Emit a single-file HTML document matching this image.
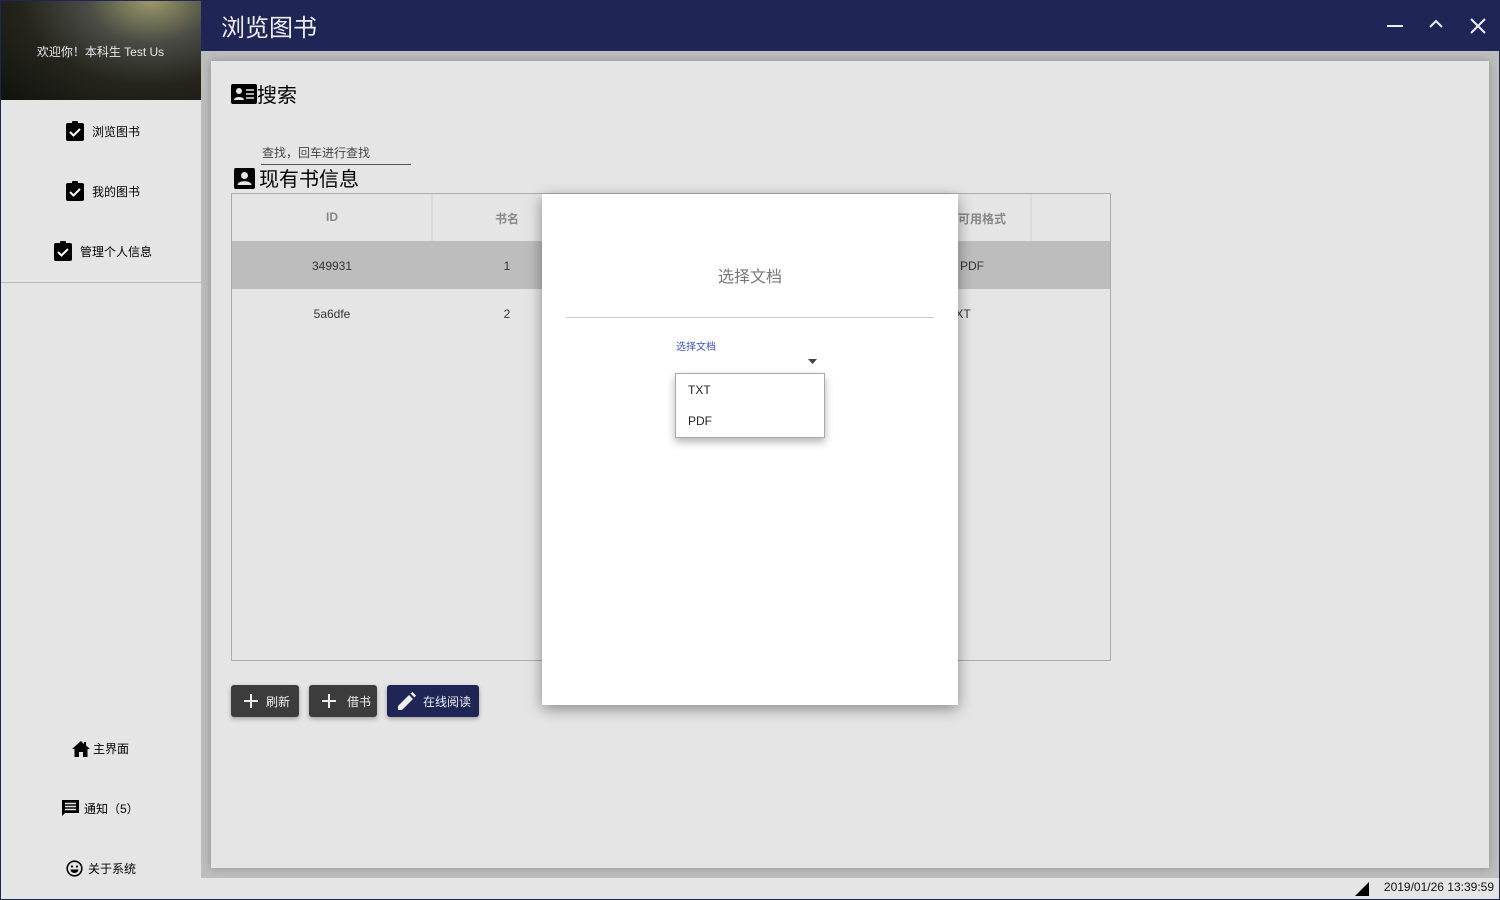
<!DOCTYPE html>
<html><head><meta charset="utf-8"><style>
*{margin:0;padding:0;box-sizing:border-box}
body{width:1500px;height:900px;overflow:hidden;position:relative;background:#e5e5e5;font-family:"Liberation Sans","Noto Sans CJK SC",sans-serif;color:#000}
.abs{position:absolute}
#frame{position:absolute;inset:0;border:1px solid #1f2656;z-index:50;pointer-events:none}
#hdr{left:0;top:0;width:201px;height:100px;background:radial-gradient(ellipse at 75% 0%,#9c9a6a 0%,#4a4c45 30%,#25251e 60%,#12120d 100%)}
#hdr span{position:absolute;left:0;right:0;top:43px;text-align:center;color:#e8e8e8;font-size:12px}
#side{left:0;top:100px;width:201px;height:800px;background:#e5e5e5}
.nav{position:absolute;font-size:12px;display:flex;align-items:center;gap:8px}
#title{left:201px;top:0;width:1299px;height:51px;background:#1f2656;color:#eee}
#title .t{position:absolute;left:20px;top:8px;font-size:24px}
#bg{left:201px;top:51px;width:1299px;height:827px;background:#bdbdbd}
#card{left:211px;top:61px;width:1278px;height:807px;background:#e5e5e5;box-shadow:0 0 8px rgba(0,0,0,.25)}
#status{left:201px;top:878px;width:1299px;height:22px;background:#e5e5e5}
.cell{position:absolute;text-align:center;font-size:12px;color:#333}
.btn{position:absolute;top:685px;height:32px;border-radius:3px;color:#eee;font-size:12px;display:flex;align-items:center;box-shadow:0 2px 5px rgba(0,0,0,.3)}
</style></head><body>
<div id="frame"></div>
<div class="abs" id="hdr"><span>欢迎你！本科生 Test Us</span></div>
<div class="abs" id="side">
  <div style="position:absolute;left:0;top:182px;width:201px;height:1px;background:#bbb"></div>
</div>
<div class="nav" style="left:66px;top:121px"><svg width="18" height="20" viewBox="0 0 18 20"><rect x="0" y="2" width="18" height="18" rx="2"/><rect x="6" y="0" width="6" height="4" rx="1"/><path d="M4 11l3.5 3.5L14 8" stroke="#fff" stroke-width="2" fill="none"/></svg><span>浏览图书</span></div>
<div class="nav" style="left:66px;top:181px"><svg width="18" height="20" viewBox="0 0 18 20"><rect x="0" y="2" width="18" height="18" rx="2"/><rect x="6" y="0" width="6" height="4" rx="1"/><path d="M4 11l3.5 3.5L14 8" stroke="#fff" stroke-width="2" fill="none"/></svg><span>我的图书</span></div>
<div class="nav" style="left:54px;top:241px"><svg width="18" height="20" viewBox="0 0 18 20"><rect x="0" y="2" width="18" height="18" rx="2"/><rect x="6" y="0" width="6" height="4" rx="1"/><path d="M4 11l3.5 3.5L14 8" stroke="#fff" stroke-width="2" fill="none"/></svg><span>管理个人信息</span></div>
<div class="nav" style="left:72px;top:740px;gap:3px"><svg width="18" height="16" viewBox="0 0 18 16"><path d="M9 0L0 8h2.5v8h4.5v-5h4v5h4.5V8H18L14 4.5V1h-2v2z"/></svg><span>主界面</span></div>
<div class="nav" style="left:62px;top:800px;gap:5px"><svg width="17" height="17" viewBox="0 0 17 17"><path d="M0 0h17v13H3l-3 3z"/><path d="M3 3.5h11M3 6.5h11M3 9.5h11" stroke="#e5e5e5" stroke-width="1.5"/></svg><span>通知（5）</span></div>
<div class="nav" style="left:66px;top:860px;gap:5px"><svg width="17" height="17" viewBox="0 0 17 17"><circle cx="8.5" cy="8.5" r="7.3" fill="none" stroke="#000" stroke-width="1.6"/><circle cx="6" cy="6.5" r="1.1"/><circle cx="11" cy="6.5" r="1.1"/><path d="M4.5 9.5h8a4 3.5 0 0 1-8 0z"/></svg><span>关于系统</span></div>

<div class="abs" id="title"><span class="t">浏览图书</span>
  <svg class="abs" style="left:1185px;top:17px" width="18" height="18"><path d="M1 9h16" stroke="#eee" stroke-width="2"/></svg>
  <svg class="abs" style="left:1228px;top:17px" width="14" height="14"><path d="M1 10l6-6 6 6" stroke="#eee" stroke-width="2" fill="none"/></svg>
  <svg class="abs" style="left:1269px;top:18px" width="16" height="16"><path d="M1 1l14 14M15 1L1 15" stroke="#eee" stroke-width="2"/></svg>
</div>
<div class="abs" id="bg"></div>
<div class="abs" id="card"></div>
<div class="abs" id="status"></div>
<svg class="abs" style="left:1355px;top:882px" width="14" height="14"><path d="M14 0V14H0z"/></svg>
<div class="abs" style="left:1376px;top:880px;width:118px;text-align:right;font-size:12px;color:#111">2019/01/26 13:39:59</div>

<!-- search -->
<svg class="abs" style="left:231px;top:84px" width="26" height="20" viewBox="0 0 26 20"><rect width="26" height="20" rx="2"/><circle cx="8" cy="7" r="3" fill="#e5e5e5"/><path d="M3 16c0-4 10-4 10 0z" fill="#e5e5e5"/><path d="M15 6h8M15 10h8M15 14h8" stroke="#e5e5e5" stroke-width="1.6"/></svg>
<div class="abs" style="left:257px;top:79px;font-size:20px">搜索</div>
<div class="abs" style="left:262px;top:144px;font-size:12px;color:#444">查找，回车进行查找</div>
<div class="abs" style="left:261px;top:164px;width:150px;height:1px;background:#555"></div>
<svg class="abs" style="left:234px;top:168px" width="21" height="21" viewBox="0 0 21 21"><rect width="21" height="21" rx="2"/><circle cx="10.5" cy="7.5" r="3.5" fill="#e5e5e5"/><path d="M3.5 17c0-5 14-5 14 0z" fill="#e5e5e5"/></svg>
<div class="abs" style="left:259px;top:163px;font-size:20px">现有书信息</div>

<!-- table -->
<div class="abs" style="left:231px;top:193px;width:880px;height:468px;border:1px solid #aaa"></div>
<div class="abs" style="left:232px;top:241px;width:878px;height:48px;background:#bdbdbd"></div>
<div class="abs" style="left:431px;top:194px;width:2px;height:47px;background:#dadada"></div>
<div class="abs" style="left:1030px;top:194px;width:2px;height:47px;background:#dadada"></div>
<div class="cell" style="left:232px;width:200px;top:210px;color:#888;font-weight:bold">ID</div>
<div class="cell" style="left:432px;width:150px;top:210px;color:#888;font-weight:bold">书名</div>
<div class="cell" style="left:932px;width:100px;top:210px;color:#888;font-weight:bold">可用格式</div>
<div class="cell" style="left:232px;width:200px;top:259px">349931</div>
<div class="cell" style="left:432px;width:150px;top:259px">1</div>
<div class="cell" style="left:232px;width:200px;top:307px">5a6dfe</div>
<div class="cell" style="left:432px;width:150px;top:307px">2</div>
<div class="cell" style="left:960px;top:259px;text-align:left">PDF</div>
<div class="cell" style="left:948px;top:307px;text-align:left">TXT</div>

<!-- buttons -->
<div class="btn" style="left:231px;width:68px;background:#3c3c3c"><svg style="margin:0 8px 0 13px" width="14" height="14"><path d="M7 0v14M0 7h14" stroke="#eee" stroke-width="2"/></svg>刷新</div>
<div class="btn" style="left:309px;width:68px;background:#3c3c3c"><svg style="margin:0 11px 0 13px" width="14" height="14"><path d="M7 0v14M0 7h14" stroke="#eee" stroke-width="2"/></svg>借书</div>
<div class="btn" style="left:387px;width:92px;background:#1f2656"><svg style="margin:0 7px 0 11px" width="18" height="18" viewBox="0 0 18 18"><path d="M0 18v-4L11 3l4 4L4 18zM12.5 1.5l2-1.5 3.5 3.5-1.5 2z" fill="#eee"/></svg>在线阅读</div>

<!-- dialog -->
<div class="abs" style="left:542px;top:194px;width:416px;height:511px;background:#fff;box-shadow:0 4px 14px rgba(0,0,0,.4)"></div>
<div class="abs" style="left:542px;top:263px;width:416px;text-align:center;font-size:16px;color:#777">选择文档</div>
<div class="abs" style="left:566px;top:317px;width:368px;height:1px;background:#ccc"></div>
<div class="abs" style="left:676px;top:338px;font-size:10px;color:#3f51b5">选择文档</div>
<svg class="abs" style="left:808px;top:359px" width="9" height="5"><path d="M0 0h9L4.5 5z" fill="#444"/></svg>
<div class="abs" style="left:675px;top:373px;width:150px;height:65px;background:#fff;border:1px solid #aaa;box-shadow:0 4px 8px rgba(0,0,0,.3);font-size:12px;color:#222">
  <div style="position:absolute;left:12px;top:9px">TXT</div>
  <div style="position:absolute;left:12px;top:40px">PDF</div>
</div>
</body></html>
